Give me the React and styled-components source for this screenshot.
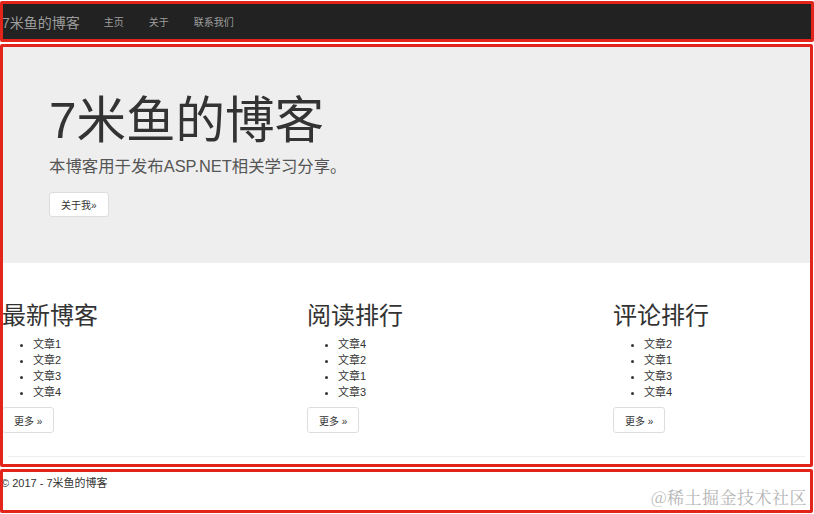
import React from 'react';
import styled, { createGlobalStyle } from 'styled-components';

const GlobalStyle = createGlobalStyle`
  html, body {
    margin: 0;
    padding: 0;
    background: #fff;
  }
  body {
    font-family: "Liberation Sans", "Noto Sans CJK SC", Arial, sans-serif;
    color: #333;
    width: 814px;
    height: 514px;
    overflow: hidden;
  }
`;

const Page = styled.div`
  position: relative;
  display: flex;
  flex-direction: column;
  gap: 2px;
  width: 814px;
  height: 514px;
  padding-top: 1px;
  box-sizing: border-box;
`;

const Frame = styled.div`
  border: 3px solid #e3241b;
  border-radius: 2px;
  box-sizing: border-box;
  width: ${({ w }) => w}px;
  height: ${({ h }) => h}px;
  overflow: hidden;
  background: #fff;
`;

const NavBar = styled.nav`
  display: flex;
  align-items: center;
  height: 100%;
  background: #222;
`;

const Brand = styled.a`
  font-size: 14px;
  color: #9d9d9d;
  margin-left: -1px;
  margin-right: 24px;
`;

const NavLink = styled.a`
  font-size: 10px;
  color: #9d9d9d;
  margin-right: 25px;
`;

const Hero = styled.section`
  background: #eee;
  padding: 47px 46px 46px;
`;

const HeroTitle = styled.h1`
  margin: 0;
  font-size: 49.5px;
  font-weight: 400;
  line-height: 53px;
  color: #333;
`;

const HeroLead = styled.p`
  margin: 6px 0 13px;
  font-size: 16.4px;
  line-height: 26px;
  color: #555;
`;

const Button = styled.button`
  display: block;
  height: ${({ h }) => h}px;
  padding: 0 ${({ px }) => px}px;
  margin-left: ${({ ml }) => ml || 0}px;
  background: #fff;
  border: 1px solid #ddd;
  border-radius: 3px;
  font-family: inherit;
  font-size: 10px;
  color: #333;
`;

const Columns = styled.div`
  display: grid;
  grid-template-columns: 305px 306px 306px;
  padding-top: 39px;
`;

const Column = styled.div`
  display: flex;
  flex-direction: column;
  align-items: flex-start;
`;

const ColTitle = styled.h2`
  margin: 0 0 0 -1px;
  font-size: 24px;
  font-weight: 400;
  line-height: 28px;
  color: #333;
`;

const List = styled.ul`
  margin: 6px 0 7px;
  padding-left: 30px;
  font-size: 11px;
  line-height: 16px;
  color: #333;
`;

const Rule = styled.hr`
  margin: 23px 5px 0;
  border: 0;
  border-top: 1px solid #eee;
`;

const FooterText = styled.p`
  margin: 4px 0 0 -2px;
  font-size: 11px;
  line-height: 14px;
  color: #333;
`;

const Watermark = styled.div`
  position: absolute;
  right: 7px;
  bottom: 5px;
  font-family: "Noto Serif CJK SC", "Noto Sans CJK SC", serif;
  font-size: 17px;
  color: #b4b4b4;
  letter-spacing: 0.5px;
`;

const sections = [
  { title: '最新博客', items: ['文章1', '文章2', '文章3', '文章4'] },
  { title: '阅读排行', items: ['文章4', '文章2', '文章1', '文章3'] },
  { title: '评论排行', items: ['文章2', '文章1', '文章3', '文章4'] },
];

export default function App() {
  return (
    <>
      <GlobalStyle />
      <Page>
        <Frame w={814} h={41}>
          <NavBar>
            <Brand>7米鱼的博客</Brand>
            <NavLink>主页</NavLink>
            <NavLink>关于</NavLink>
            <NavLink>联系我们</NavLink>
          </NavBar>
        </Frame>
        <Frame w={813} h={423}>
          <Hero>
            <HeroTitle>7米鱼的博客</HeroTitle>
            <HeroLead>本博客用于发布ASP.NET相关学习分享。</HeroLead>
            <Button h={25} px={11}>关于我»</Button>
          </Hero>
          <Columns>
            {sections.map((s) => (
              <Column key={s.title}>
                <ColTitle>{s.title}</ColTitle>
                <List>
                  {s.items.map((it) => <li key={it}>{it}</li>)}
                </List>
                <Button h={26} px={11} ml={-1}>更多 »</Button>
              </Column>
            ))}
          </Columns>
          <Rule />
        </Frame>
        <Frame w={813} h={44}>
          <FooterText>© 2017 - 7米鱼的博客</FooterText>
        </Frame>
        <Watermark>@稀土掘金技术社区</Watermark>
      </Page>
    </>
  );
}
